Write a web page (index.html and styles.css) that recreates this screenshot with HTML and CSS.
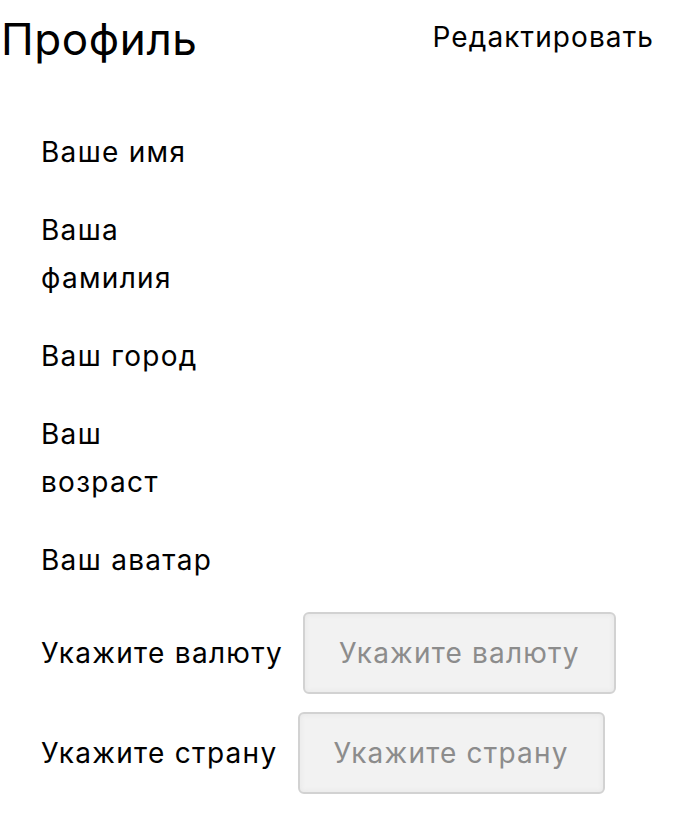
FILE: index.html
```html
<!DOCTYPE html>
<html lang="ru">
<head>
<meta charset="utf-8">
<title>Профиль</title>
<link rel="stylesheet" href="styles.css">
</head>
<body>
<div class="page">
  <header class="header">
    <h1 class="title">Профиль</h1>
    <a class="edit">Редактировать</a>
  </header>
  <div class="info">
    <div class="info-row">Ваше имя</div>
    <div class="info-row">Ваша фамилия</div>
    <div class="info-row">Ваш город</div>
    <div class="info-row">Ваш возраст</div>
    <div class="info-row">Ваш аватар</div>
  </div>
  <div class="form">
    <div class="form-row">
      <span class="form-label">Укажите валюту</span>
      <button class="select">Укажите валюту</button>
    </div>
    <div class="form-row">
      <span class="form-label">Укажите страну</span>
      <button class="select">Укажите страну</button>
    </div>
  </div>
</div>
</body>
</html>
```
FILE: styles.css
```css
html, body {
  margin: 0;
  padding: 0;
  background: #ffffff;
}
body {
  font-family: Inter, "Liberation Sans", Arial, sans-serif;
  color: #000;
  letter-spacing: 1.3px;
}
.page {
  width: 686px;
}
.header {
  display: flex;
  justify-content: space-between;
  align-items: flex-start;
  padding: 11px 32px 0 1px;
}
.title {
  margin: 0;
  font-size: 44px;
  font-weight: normal;
  line-height: 56px;
  letter-spacing: 0.6px;
}
.edit {
  margin-top: 2px;
  font-size: 28px;
  line-height: 48px;
  letter-spacing: 1.1px;
  color: #000;
  cursor: pointer;
}
.info {
  display: flex;
  flex-direction: column;
  gap: 30px;
  margin-top: 61px;
  padding-left: 41px;
}
.info-row {
  font-size: 28px;
  line-height: 48px;
  max-width: 180px;
}
.form {
  display: flex;
  flex-direction: column;
  gap: 18px;
  margin-top: 28px;
  padding-left: 41px;
}
.form-row {
  display: flex;
  align-items: center;
  gap: 20px;
}
.form-label {
  font-size: 28px;
  line-height: 48px;
}
.select {
  box-sizing: border-box;
  height: 82px;
  padding: 0 34px;
  border: 2px solid #d2d2d2;
  border-radius: 6px;
  background: #f2f2f2;
  box-shadow: inset 0 0 4px 1px #e8e8e8;
  font-family: inherit;
  font-size: 28px;
  letter-spacing: 1.2px;
  color: #8c8c8c;
}
```
